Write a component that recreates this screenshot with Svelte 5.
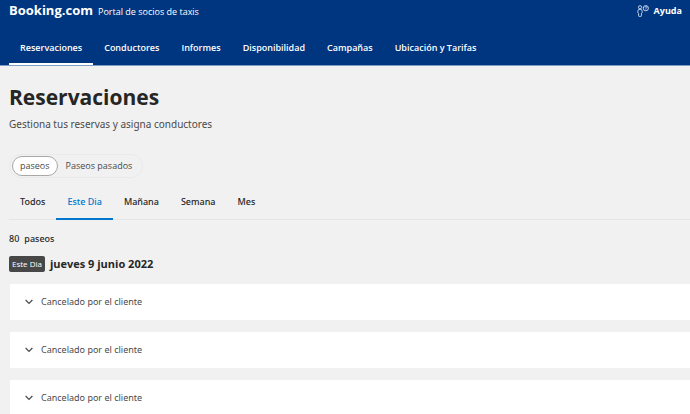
<script>
  const navItems = [
    "Reservaciones",
    "Conductores",
    "Informes",
    "Disponibilidad",
    "Campañas",
    "Ubicación y Tarifas",
  ];
  const periods = ["Todos", "Este Dia", "Mañana", "Semana", "Mes"];
  const rides = [
    { id: 1, status: "Cancelado por el cliente" },
    { id: 2, status: "Cancelado por el cliente" },
    { id: 3, status: "Cancelado por el cliente" },
  ];

  let currentNav = $state("Reservaciones");
  let rideType = $state("paseos");
  let period = $state("Este Dia");
</script>

<header>
  <div class="top">
    <a class="brand" href="#home">
      <span class="logo">Booking.com</span>
      <span class="portal">Portal de socios de taxis</span>
    </a>
    <a class="help" href="#ayuda">
      <svg width="12" height="12" viewBox="0 0 12 12" aria-hidden="true">
        <circle cx="3" cy="2.3" r="1.6" />
        <path d="M.8 7.8V6.4a2.2 2.2 0 0 1 4.4 0v1.4l-.8.6v2.4a.6.6 0 0 1-.6.6H2.2a.6.6 0 0 1-.6-.6V8.4z" />
        <circle cx="8.8" cy="3.2" r="2.6" />
        <path d="M8 2.5a.9.9 0 1 1 1.3.8q-.5.2-.5.6M8.8 4.5v.4" />
      </svg>
      Ayuda
    </a>
  </div>
  <nav>
    {#each navItems as item}
      <a
        href="#{item}"
        class:active={currentNav === item}
        onclick={() => (currentNav = item)}
      >{item}</a>
    {/each}
  </nav>
</header>

<main>
  <h1>Reservaciones</h1>
  <p class="intro">Gestiona tus reservas y asigna conductores</p>

  <div class="switch">
    {#each ["paseos", "Paseos pasados"] as type}
      <button class:selected={rideType === type} onclick={() => (rideType = type)}>
        {type}
      </button>
    {/each}
  </div>

  <div class="tabs" role="tablist">
    {#each periods as item}
      <button
        role="tab"
        aria-selected={period === item}
        class:active={period === item}
        onclick={() => (period = item)}
      >{item}</button>
    {/each}
  </div>

  <p class="count"><span>80</span><span>paseos</span></p>

  <div class="day">
    <span class="badge">Este Dia</span>
    <h2>jueves 9 junio 2022</h2>
  </div>

  <div class="rides">
    {#each rides as ride (ride.id)}
      <button class="ride">
        <svg width="8" height="6" viewBox="0 0 8 6" aria-hidden="true">
          <path d="M.6 1l3.4 3.4L7.4 1" />
        </svg>
        {ride.status}
      </button>
    {/each}
  </div>
</main>

<style>
  :global(body) {
    background: #f1f1f1;
    color: #262626;
    font-family: "Open Sans", "Noto Sans", sans-serif;
    font-size: 9px;
    line-height: 14px;
  }

  a {
    color: inherit;
    text-decoration: none;
  }

  button {
    border: 0;
    margin: 0;
    background: none;
    color: inherit;
    font: inherit;
    cursor: pointer;
  }

  header {
    background: #003580;
    color: #fff;
    border-bottom: 1px solid #7e9cc6;
  }

  .top {
    display: flex;
    justify-content: space-between;
    align-items: flex-start;
    padding: 0 8px 0 9px;
  }

  .brand {
    display: flex;
    align-items: baseline;
    gap: 5px;
  }

  .logo {
    font-size: 13px;
    font-weight: 700;
    line-height: 20px;
  }

  .help {
    display: flex;
    align-items: center;
    gap: 5px;
    padding-top: 4px;
    font-weight: 700;
  }

  .help svg {
    fill: none;
    stroke: #c4d3e9;
    stroke-width: 1;
  }

  nav {
    display: flex;
    padding: 11px 9px 0;
  }

  nav a {
    padding: 10px 11px 8px;
    border-bottom: 2px solid transparent;
    font-weight: 600;
    white-space: nowrap;
  }

  nav a.active {
    border-color: #fff;
  }

  main {
    padding: 16px 0 0 9px;
  }

  h1 {
    margin: 0;
    font-size: 21px;
    line-height: 30px;
  }

  .intro {
    margin: 5px 0 23px;
    font-family: "Noto Sans", sans-serif;
    font-size: 10px;
    color: #4a4a4a;
  }

  .switch {
    display: flex;
    width: fit-content;
    padding: 1px 2px;
    border: 1px solid #eaeaea;
    border-radius: 12px;
  }

  .switch button {
    padding: 2px 7px;
    border: 1px solid transparent;
    border-radius: 10px;
    color: #4a4a4a;
  }

  .switch button.selected {
    background: #fff;
    border-color: #a8a8a8;
  }

  .tabs {
    display: flex;
    margin-top: 8px;
    border-bottom: 1px solid #e6e6e6;
  }

  .tabs button {
    padding: 9px 11px;
    margin-bottom: -1px;
    border-bottom: 2px solid transparent;
    font-family: "Noto Sans", sans-serif;
    font-weight: 500;
  }

  .tabs button.active {
    color: #0077cc;
    border-color: #0077cc;
  }

  .count {
    display: flex;
    gap: 5px;
    margin: 12px 0 10px;
    font-family: "Noto Sans", sans-serif;
    font-weight: 500;
  }

  .day {
    display: flex;
    align-items: center;
    gap: 5px;
  }

  .badge {
    padding: 1px 3px;
    border-radius: 2px;
    background: #474747;
    color: #fff;
    font-size: 8px;
  }

  h2 {
    margin: 0;
    font-size: 11px;
    line-height: 16px;
  }

  .rides {
    display: flex;
    flex-direction: column;
    gap: 12px;
    margin-top: 12px;
  }

  .ride {
    display: flex;
    align-items: center;
    gap: 8px;
    padding: 11px 15px;
    border-left: 1px solid #f1f1f1;
    background: #fff;
    color: #4a4a4a;
    font-family: "Noto Sans", sans-serif;
    text-align: left;
  }

  .ride svg {
    fill: none;
    stroke: #4a4a4a;
    stroke-width: 1.2;
  }
</style>
